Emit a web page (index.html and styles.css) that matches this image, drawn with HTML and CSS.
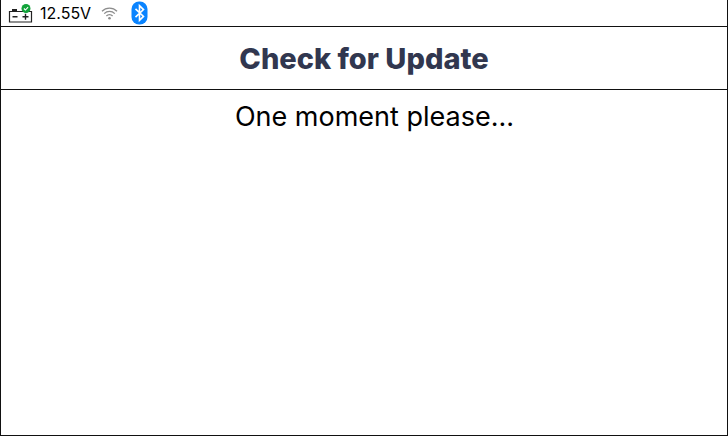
FILE: index.html
```html
<!DOCTYPE html>
<html lang="en">
<head>
    <meta charset="UTF-8">
    <meta name="viewport" content="width=device-width, initial-scale=1.0">
    <title>Check for Update</title>
    <link rel="stylesheet" href="styles.css">
</head>
<body>
    <div class="screen">
        <div class="status-bar">
            <svg class="battery-icon" width="26" height="20" viewBox="0 0 26 20">
                <path d="M2.500 8.500h22v10.500H2.500z" fill="none" stroke="#222" stroke-width="1.200"/>
                <path d="M5 6h5v2.500H5z" fill="#222"/>
                <path d="M5.500 13.700h5M15.500 13.700h6M18.500 10.700v6" fill="none" stroke="#222" stroke-width="1.400"/>
                <circle cx="19" cy="5.500" r="4.500" fill="#12a33a"/>
                <path d="M16.900 5.500l1.500 1.500 2.700-2.900" fill="none" stroke="#fff" stroke-width="1.100"/>
            </svg>
            <span class="voltage">12.55V</span>
            <svg class="wifi-icon" width="17" height="14" viewBox="0 0 17 14">
                <path d="M1 5.200a10.500 10.500 0 0 1 15 0M3.200 7.600a7.400 7.400 0 0 1 10.600 0M5.400 10a4.200 4.200 0 0 1 6.200 0" fill="none" stroke="#8c8c8c" stroke-width="1.300"/>
                <circle cx="8.500" cy="12.200" r="1.300" fill="#8c8c8c"/>
            </svg>
            <svg class="bluetooth-icon" width="17" height="24" viewBox="0 0 17 24">
                <rect x="0.500" y="0.500" width="16" height="23" rx="7.500" fill="#0a84ff"/>
                <path d="M4.500 7.800l8 7.600-4 4V4.600l4 4-8 7.600" fill="none" stroke="#fff" stroke-width="1.600"/>
            </svg>
        </div>
        <div class="title-bar">
            <h1>Check for Update</h1>
        </div>
        <div class="content">
            <p class="message">One moment please...</p>
        </div>
    </div>
</body>
</html>
```

FILE: styles.css
```css
* {
    margin: 0;
    padding: 0;
    box-sizing: border-box;
}

body {
    font-family: Inter, 'Liberation Sans', sans-serif;
    background: #fff;
}

.screen {
    width: 728px;
    height: 436px;
    display: flex;
    flex-direction: column;
    border: 1px solid #111;
    border-top: none;
    overflow: hidden;
}

.status-bar {
    height: 27px;
    display: flex;
    align-items: center;
    padding-left: 6px;
    border-bottom: 1px solid #111;
}

.voltage {
    margin-left: 7px;
    font-size: 16px;
    color: #000;
}

.wifi-icon {
    margin-left: 10px;
}

.bluetooth-icon {
    margin-left: 13px;
}

.title-bar {
    height: 63px;
    display: flex;
    align-items: center;
    justify-content: center;
    border-bottom: 1px solid #111;
}

h1 {
    font-size: 29px;
    font-weight: 800;
    color: #31374f;
}

.content {
    flex: 1;
    padding-top: 10px;
    padding-left: 21px;
    text-align: center;
}

.message {
    font-size: 27px;
    line-height: 34px;
    color: #000;
}
```
